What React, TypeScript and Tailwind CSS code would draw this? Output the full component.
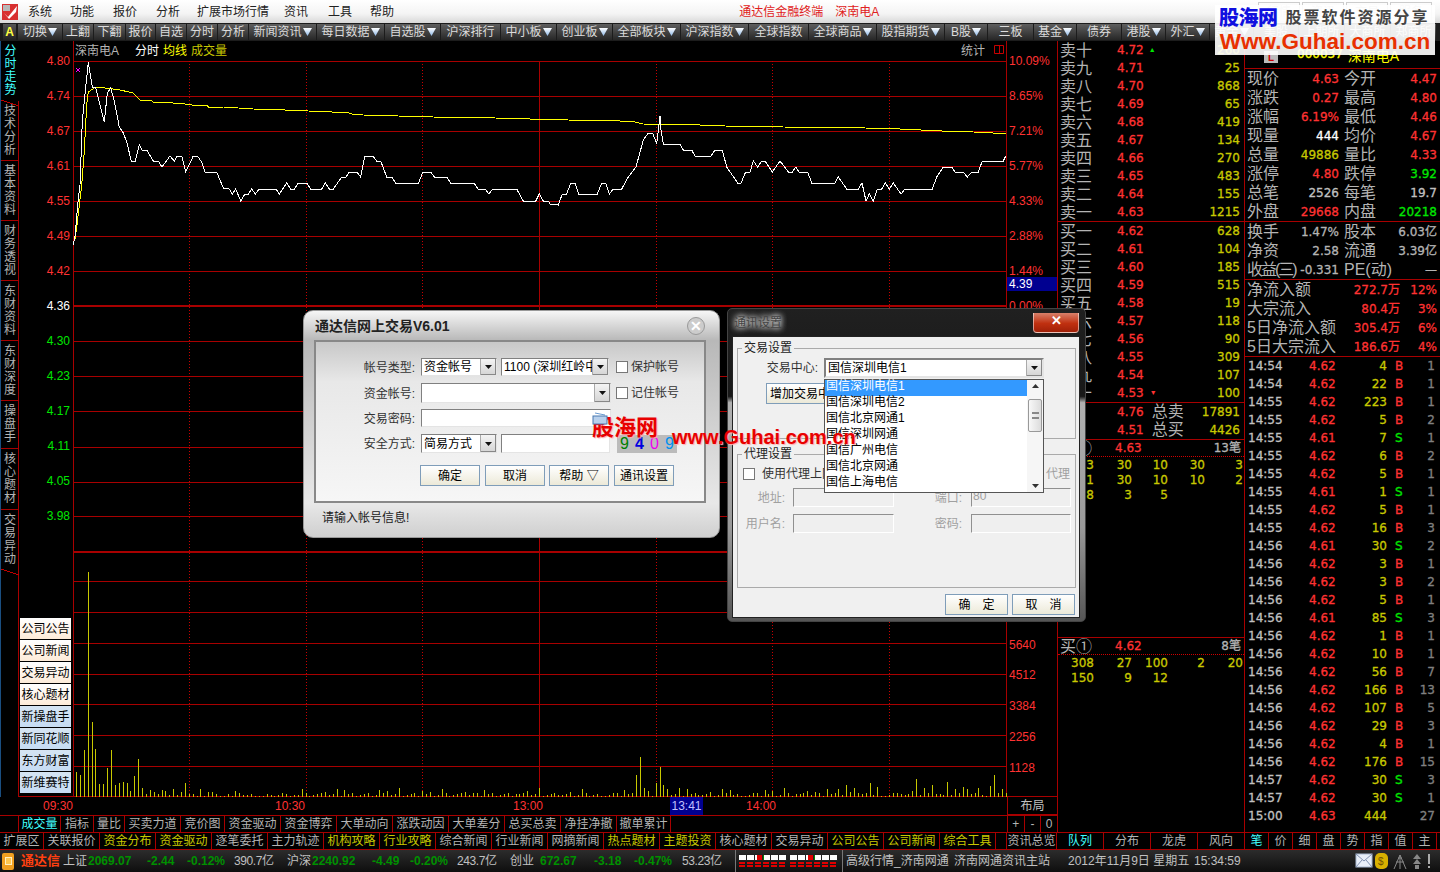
import type { ReactNode } from "react";

const num = "[font-family:'DejaVu_Sans','Noto_Sans_CJK_SC',sans-serif] text-[12px] [-webkit-text-stroke:0.3px]";
const red = "text-[#ff3232]";
const yellow = "text-[#c8c800]";
const green = "text-[#00e600]";
const gray = "text-[#c0c0c0]";

const toolbar: [string, number, boolean?][] = [
  ["切换", 44, true], ["上翻", 30], ["下翻", 31], ["报价", 29], ["自选", 30], ["分时", 30], ["分析", 30],
  ["新闻资讯", 67, true], ["每日数据", 67, true], ["自选股", 55, true], ["沪深排行", 59], ["中小板", 55, true],
  ["创业板", 55, true], ["全部板块", 67, true], ["沪深指数", 67, true], ["全球指数", 59], ["全球商品", 67, true],
  ["股指期货", 67, true], ["B股", 42, true], ["三板", 45], ["基金", 42, true], ["债券", 44], ["港股", 43, true],
  ["外汇", 43, true], ["黄金", 43, true], ["美股", 44], ["上期所", 45], ["大商所", 45], ["郑商所", 45],
];

const sideTabs: [string, string, boolean?][] = [
  ["分时走势", "h-[60px]", true], ["技术分析", "h-[60px]"], ["基本资料", "h-[60px]"], ["财务透视", "h-[60px]"],
  ["东财资料", "h-[60px]"], ["东财深度", "h-[60px]"], ["操盘手", "h-[48px]"], ["核心题材", "h-[61px]"], ["交易异动", "h-[60px]"],
];

const sells = [["卖十", "4.72", "260"], ["卖九", "4.71", "25"], ["卖八", "4.70", "868"], ["卖七", "4.69", "65"], ["卖六", "4.68", "419"], ["卖五", "4.67", "134"], ["卖四", "4.66", "270"], ["卖三", "4.65", "483"], ["卖二", "4.64", "155"], ["卖一", "4.63", "1215"]];
const buys = [["买一", "4.62", "628"], ["买二", "4.61", "104"], ["买三", "4.60", "185"], ["买四", "4.59", "515"], ["买五", "4.58", "19"], ["买六", "4.57", "118"], ["买七", "4.56", "90"], ["买八", "4.55", "309"], ["买九", "4.54", "107"], ["买十", "4.53", "100"]];

const trades: [string, string, string, string, string][] = [
  ["14:54", "4.62", "4", "B", "1"], ["14:54", "4.62", "22", "B", "1"], ["14:55", "4.62", "223", "B", "1"], ["14:55", "4.62", "5", "B", "2"],
  ["14:55", "4.61", "7", "S", "1"], ["14:55", "4.62", "6", "B", "2"], ["14:55", "4.62", "5", "B", "1"], ["14:55", "4.61", "1", "S", "1"],
  ["14:55", "4.62", "5", "B", "1"], ["14:55", "4.62", "16", "B", "3"], ["14:56", "4.61", "30", "S", "2"], ["14:56", "4.62", "3", "B", "1"],
  ["14:56", "4.62", "3", "B", "2"], ["14:56", "4.62", "5", "B", "1"], ["14:56", "4.61", "85", "S", "3"], ["14:56", "4.62", "1", "B", "1"],
  ["14:56", "4.62", "10", "B", "1"], ["14:56", "4.62", "56", "B", "7"], ["14:56", "4.62", "166", "B", "13"], ["14:56", "4.62", "107", "B", "5"],
  ["14:56", "4.62", "29", "B", "3"], ["14:56", "4.62", "4", "B", "1"], ["14:56", "4.62", "176", "B", "15"], ["14:57", "4.62", "30", "S", "3"],
  ["14:57", "4.62", "30", "S", "1"], ["15:00", "4.63", "444", "", "27"],
];

// [label, value, colour, label, value, colour]
const quote: [string, string, string, string, string, string][] = [
  ["现价", "4.63", red, "今开", "4.47", red],
  ["涨跌", "0.27", red, "最高", "4.80", red],
  ["涨幅", "6.19%", red, "最低", "4.46", red],
  ["现量", "444", "text-white", "均价", "4.67", red],
  ["总量", "49886", yellow, "量比", "4.33", red],
  ["涨停", "4.80", red, "跌停", "3.92", green],
  ["总笔", "2526", gray, "每笔", "19.7", gray],
  ["外盘", "29668", red, "内盘", "20218", green],
];

const indicatorTabs: [string, string][] = [
  ["成交量", "w-[43px]"], ["指标", "w-[33px]"], ["量比", "w-[31px]"], ["买卖力道", "w-[56px]"], ["竞价图", "w-[44px]"], ["资金驱动", "w-[56px]"],
  ["资金博弈", "w-[56px]"], ["大单动向", "w-[56px]"], ["涨跌动因", "w-[56px]"], ["大单差分", "w-[56px]"], ["总买总卖", "w-[56px]"], ["净挂净撤", "w-[56px]"], ["撤单累计", "w-[54px]"],
];

const infoTabs: [string, string, boolean?][] = [
  ["扩展区", "w-[44px]"], ["关联报价", "w-[56px]"], ["资金分布", "w-[56px]", true], ["资金驱动", "w-[56px]", true], ["逐笔委托", "w-[56px]"], ["主力轨迹", "w-[56px]"],
  ["机构攻略", "w-[56px]", true], ["行业攻略", "w-[56px]", true], ["综合新闻", "w-[56px]"], ["行业新闻", "w-[56px]"], ["网摘新闻", "w-[56px]"], ["热点题材", "w-[56px]", true],
  ["主题投资", "w-[56px]", true], ["核心题材", "w-[56px]"], ["交易异动", "w-[56px]"], ["公司公告", "w-[56px]", true], ["公司新闻", "w-[56px]", true], ["综合工具", "w-[56px]", true],
];

const white: number[][] = [
  [73.3, 244.5], [75, 236], [78.3, 199], [80, 185], [82.3, 121], [84.3, 101], [88.3, 62], [90, 73], [92.3, 87], [95.7, 88], [99.3, 102], [104.3, 122], [107.3, 93], [110.7, 88], [114, 100], [119.3, 127], [123.3, 133], [126.7, 142], [131.3, 161], [135.3, 161], [139.3, 145], [142, 150], [146.7, 150], [153.3, 161], [158.3, 161], [162, 167], [170, 156], [174.3, 161], [177.3, 156], [181.7, 156], [185.7, 172], [193.3, 156], [197.3, 156], [201.7, 162], [205, 172], [216.7, 172], [223.3, 188], [229.3, 189], [232.3, 194], [235.7, 189], [240.7, 201], [245, 194], [248.3, 194], [251.7, 189], [255.3, 194], [259.3, 189], [276, 189], [279.3, 194], [286.7, 183], [290.7, 189], [294.3, 189], [298.3, 183], [306.7, 183], [310.7, 189], [321.7, 189], [325.3, 183], [329.3, 189], [333.3, 189], [341.7, 177], [346, 177], [349.3, 172], [356.7, 172], [360.7, 177], [364.7, 156], [372.7, 156], [376.7, 161], [380.7, 161], [386.7, 177], [391.7, 177], [395.7, 183], [418.7, 183], [422.7, 172], [430.7, 172], [434.3, 177], [446.7, 177], [450.7, 183], [474, 183], [478, 189], [485, 189], [489, 194], [492.7, 189], [516.7, 189], [523.3, 201], [535.7, 201], [539.3, 194], [543.3, 201], [548.7, 201], [550, 204],
  [558.3, 205], [562.3, 194], [566.7, 194], [570.7, 183], [575, 183], [578.7, 194], [597.3, 194], [601.7, 183], [605.7, 183], [609.3, 194], [613.3, 189], [621.7, 189], [628.3, 177], [636, 167], [643.3, 140], [648.3, 133], [652.7, 133], [656.7, 144], [660, 116], [661, 130], [663.3, 144], [680, 144], [683.3, 150], [691.7, 150], [695, 156], [711, 156], [715, 150], [722.3, 150], [726.7, 167], [737.7, 183], [741, 183], [745.7, 172], [750, 172], [753.3, 161], [757.7, 167], [761.7, 161], [765, 161], [772.3, 172], [780, 161], [788.3, 172], [792.3, 172], [796, 167], [799, 172], [807.7, 172], [811.7, 183], [835, 183], [838.3, 177], [846.7, 189], [858.3, 189], [862, 183], [866, 201], [869.3, 194], [873.3, 201], [877.3, 189], [881.7, 189], [885.3, 183], [889.3, 189], [893.3, 183], [901, 194], [905, 189], [932.3, 189], [936.7, 177], [943.3, 167], [951.7, 167], [955, 172], [963.3, 172], [967.3, 177], [971.7, 172], [978.3, 172], [982.3, 161], [1003.3, 161], [1005.7, 156],
];

const avg: number[][] = [
  [75, 239], [77.3, 222.5], [81.7, 185], [84.3, 151.5], [86.7, 104], [88.3, 92], [95.7, 87], [113.3, 89], [120, 90], [133.3, 93], [140, 100], [151.7, 101], [153.3, 102], [165, 102], [173.3, 103], [183.3, 103], [185, 104], [191.7, 105], [206.7, 105], [208.3, 107], [223.3, 107], [238.3, 108], [253.3, 109], [285, 110], [308.3, 111], [331.7, 112], [346.7, 112], [351.7, 114], [363.3, 115], [398.3, 116], [433.3, 117], [495, 118], [530, 119], [550, 119], [568.3, 120], [620, 121], [635, 122], [643.3, 124], [700, 125], [725, 126], [783.3, 127], [865, 128], [900, 129], [941.7, 131], [973.3, 132], [993.3, 133], [1005.7, 134],
];

const firstBars = [25, 22, 47, 225, 75, 48, 13, 13, 29, 47, 12, 14, 15, 14, 6, 21, 38, 9, 3, 7, 5, 3, 7, 6, 2, 8, 2, 5, 14, 3, 3, 1, 8, 1, 5, 5, 3, 1, 1, 3, 1, 6, 4, 2, 2, 3, 1, 1, 1, 3, 2, 1, 2, 4, 3, 1, 2];
const barOverrides: Record<number, number> = { 144: 22, 145: 40, 146: 9, 147: 6, 149: 14, 150: 30, 151: 12, 152: 8, 196: 8, 198: 12, 200: 9, 204: 14, 206: 10, 216: 18, 218: 9, 220: 12, 224: 15, 226: 8, 228: 10, 232: 9, 235: 11, 236: 22, 238: 8 };

const pts = (list: number[][]) => list.map((p) => p.join(",")).join(" ");

function barsPath() {
  let d = "";
  for (let i = 0; i < 240; i++) {
    const h = i < firstBars.length ? firstBars[i] : barOverrides[i] ?? 1 + ((i * 7) % 11 > 6 ? (i * 13) % 9 : (i * 5) % 4);
    const x = Math.round(76 + i * 3.89) + 0.5;
    d += `M${x} 797V${797 - h}`;
  }
  return d;
}

function Arrow() {
  return (
    <svg width="9" height="8" viewBox="0 0 9 8" className="ml-[1px] shrink-0">
      <defs>
        <linearGradient id="arrowFill" x1="0" x2="0" y1="0" y2="1">
          <stop offset="0" stopColor="#ffffff" />
          <stop offset="1" stopColor="#8db8e8" />
        </linearGradient>
      </defs>
      <path d="M0 0H9L4.5 8Z" fill="url(#arrowFill)" />
    </svg>
  );
}

function MenuBar() {
  const items: [string, string][] = [["系统", "ml-[10px]"], ["功能", "ml-[18px]"], ["报价", "ml-[19px]"], ["分析", "ml-[19px]"], ["扩展市场行情", "ml-[17px]"], ["资讯", "ml-[15px]"], ["工具", "ml-[20px]"], ["帮助", "ml-[18px]"]];
  return (
    <div className="flex h-[23px] shrink-0 items-center bg-[linear-gradient(180deg,#ffffff,#f4f4f4_60%,#d8d8d8)] text-[12px] text-[#222]">
      <svg width="16" height="16" viewBox="0 0 16 16" className="ml-[2px]">
        <rect width="16" height="16" fill="#d83030" />
        <path d="M2 9l4 4L15 2l-1 6-7 7z" fill="#fff" />
        <rect x="1" y="1" width="7" height="6" fill="#b8b8b8" />
      </svg>
      {items.map(([label, space]) => (
        <span key={label} className={space}>{label}</span>
      ))}
      <span className="ml-[345px] text-[#e02020]">通达信金融终端</span>
      <span className="ml-[12px] text-[#e02020]">深南电A</span>
      <div className="ml-auto mr-[8px] flex gap-[2px] text-[#bbb]">
        {["行情", "资讯", "交易", "服务"].map((t) => (
          <span key={t} className="border border-[#ccc] px-[8px]">{t}</span>
        ))}
      </div>
    </div>
  );
}

function Toolbar() {
  return (
    <div className="flex h-[18px] shrink-0 items-center gap-[1px] overflow-hidden bg-[#1c1c1c] pl-[3px] text-[12px] text-[#dcdcdc]">
      <span className="mr-[1px] flex h-[16px] w-[13px] shrink-0 items-center justify-center bg-[linear-gradient(180deg,#555,#222)] font-bold text-[#ffff40]">A</span>
      {toolbar.map(([label, width, arrow]) => (
        <span
          key={label}
          style={{ width }}
          className="flex h-[16px] shrink-0 items-center justify-center whitespace-nowrap bg-[linear-gradient(180deg,#5e5e5e,#262626)]"
        >
          {label}
          {arrow && <Arrow />}
        </span>
      ))}
    </div>
  );
}

function SideTabs() {
  return (
    <div className="flex w-[19px] shrink-0 flex-col border-l border-l-[#1a4e80]">
      {sideTabs.map(([label, height, active], tab) => (
        <div
          key={label}
          className={`relative flex w-full flex-col items-center justify-center pl-[1px] text-[12px] leading-[13px] ${height} ${active ? "text-[#40ffff]" : "border-r border-[#a80000] text-[#b4b4b4]"} ${tab === 0 || tab === 8 ? "" : "border-b border-[#a80000]"}`}
        >
          {label.split("").map((c, i) => (
            <span key={i}>{c}</span>
          ))}
          {(tab === 0 || tab === 8) && (
            <svg width="18" height="7" viewBox="0 0 18 7" className="absolute -bottom-[6px] left-0" shapeRendering="crispEdges">
              <path d="M0 0L18 6" stroke="#c00000" fill="none" />
            </svg>
          )}
        </div>
      ))}
      <div className="grow border-r border-[#a80000]" />
    </div>
  );
}

function Chart() {
  const priceLines = [61, 96, 131, 166, 201, 236, 271, 341, 376, 411, 447, 482, 516];
  const volLines = [581, 612, 643, 674, 704, 735, 766];
  const dotted = [189, 306, 422, 656, 772, 889];
  const prices: [string, string][] = [["4.80", "#ff3232"], ["4.74", "#ff3232"], ["4.67", "#ff3232"], ["4.61", "#ff3232"], ["4.55", "#ff3232"], ["4.49", "#ff3232"], ["4.42", "#ff3232"], ["4.36", "#ffffff"], ["4.30", "#00e600"], ["4.23", "#00e600"], ["4.17", "#00e600"], ["4.11", "#00e600"], ["4.05", "#00e600"], ["3.98", "#00e600"]];
  const pcts = ["10.09%", "8.65%", "7.21%", "5.77%", "4.33%", "2.88%", "1.44%", "0.00%"];
  const vols: [string, number][] = [["5640", 645], ["4512", 675], ["3384", 706], ["2256", 737], ["1128", 768]];
  return (
    <svg width="1039" height="756" viewBox="19 41 1039 756" className="block shrink-0" fontFamily="'Liberation Sans','Noto Sans CJK SC',sans-serif" fontSize="12">
      <text x="75" y="55" fill="#b4b4b4">深南电A</text>
      <text x="135" y="55" fill="#ffffff">分时</text>
      <text x="163" y="55" fill="#ffff00">均线</text>
      <text x="191" y="55" fill="#c8c800">成交量</text>
      <text x="961" y="55" fill="#b4b4b4">统计</text>
      <path d="M994.5 45.5h9v8h-9zM999.5 45.5v8" fill="none" stroke="#c80000" />
      <g shapeRendering="crispEdges" stroke="#a80000" fill="none">
        {priceLines.concat(volLines).map((y) => (
          <path key={y} d={`M73 ${y + 0.5}H1006`} />
        ))}
        <path d="M73 306H1006M73 552H1006" strokeWidth="2" />
        <path d="M73.5 41V797M1006.5 41V797M539.5 61V797M1057.5 41V797M19 796.5H1058" />
        {dotted.map((x) => (
          <path key={x} d={`M${x + 0.5} 61V797`} strokeDasharray="1 2" stroke="#c80000" />
        ))}
      </g>
      <path d={barsPath()} stroke="#c8c800" fill="none" shapeRendering="crispEdges" />
      <polyline points={pts(avg)} fill="none" stroke="#ffff00" shapeRendering="crispEdges" />
      <polyline points={pts(white)} fill="none" stroke="#ffffff" shapeRendering="crispEdges" />
      <path d="M76 68l4 4M80 68l-4 4" stroke="#ff00ff" />
      {prices.map(([p, c], i) => (
        <text key={p} x="70" y={65 + i * 35} textAnchor="end" fill={c}>{p}</text>
      ))}
      {pcts.map((p, i) => (
        <text key={p} x="1009" y={65 + i * 35} fill="#ff3232">{p}</text>
      ))}
      {vols.map(([v, y]) => (
        <text key={v} x="1009" y={y + 4} fill="#ff3232">{v}</text>
      ))}
      <rect x="1007" y="277" width="50" height="14" fill="#000090" />
      <text x="1009" y="288" fill="#ffffff">4.39</text>
    </svg>
  );
}

function QuickLinks() {
  const rows: [string, boolean][] = [["公司公告", true], ["公司新闻", true], ["交易异动", true], ["核心题材", true], ["新操盘手", false], ["新同花顺", false], ["东方财富", false], ["新维赛特", false]];
  return (
    <div className="absolute left-[20px] top-[618px] flex w-[51px] flex-col gap-[1px]">
      {rows.map(([label, warm]) => (
        <div
          key={label}
          className={`flex h-[21px] items-center justify-center text-[12px] text-black ${warm ? "bg-[linear-gradient(180deg,#ffffff,#fdebd8)]" : "bg-[linear-gradient(180deg,#d5e4f2,#c6dcf3)]"}`}
        >
          {label}
        </div>
      ))}
    </div>
  );
}

function TimeRow() {
  return (
    <div className="flex h-[18px] shrink-0 items-center text-[12px] text-[#ff3232]">
      <span className="ml-[43px] w-[30px]">09:30</span>
      <span className="ml-[202px] w-[30px]">10:30</span>
      <span className="ml-[208px] w-[30px]">13:00</span>
      <span className="ml-[127px] flex h-full w-[33px] items-center justify-center bg-[#000090] text-[#c0c0ff]">13:41</span>
      <span className="ml-[43px] w-[30px]">14:00</span>
      <span className="ml-auto flex h-full w-[51px] items-center justify-center border-x border-b border-[#a80000] text-[#c0c0c0]">布局</span>
    </div>
  );
}

function IndicatorRow() {
  return (
    <div className="flex h-[17px] shrink-0 items-stretch border-t border-[#a80000] text-[12px] leading-[16px] text-[#b4b4b4]">
      {indicatorTabs.map(([label, width], i) => (
        <span key={label} className={`${width} border-r border-[#a80000] text-center ${i === 0 ? "ml-[18px] border-l text-[#40ffff]" : ""}`}>{label}</span>
      ))}
      <div className="ml-auto flex w-[51px] border-x border-[#a80000]">
        {["+", "-", "0"].map((s) => (
          <span key={s} className="flex-1 border-r border-[#a80000] text-center last:border-r-0">{s}</span>
        ))}
      </div>
    </div>
  );
}

function BookRow({ row, mark }: { row: string[]; mark?: ReactNode }) {
  return (
    <div className="flex h-[18px] items-center pr-[4px]">
      <span className="w-[59px] pl-[2px] pt-[1px] text-[16px] leading-[18px] text-[#b4b4b4]">{row[0]}</span>
      <span className={`${num} ${red}`}>{row[1]}</span>
      {mark}
      <span className={`${num} ${yellow} ml-auto`}>{row[2]}</span>
    </div>
  );
}

function QueueCols({ cols }: { cols: string[] }) {
  const widths = ["w-[36px]", "w-[38px]", "w-[36px]", "w-[37px]", "w-[38px]"];
  return (
    <div className="flex h-[15px] items-center">
      {cols.map((c, i) => (
        <span key={i} className={`${widths[i]} ${num} ${yellow} text-right`}>{c}</span>
      ))}
    </div>
  );
}

function OrderBook() {
  const dotted = "border-b border-dotted border-[#d00000]";
  return (
    <div className="flex w-[187px] shrink-0 flex-col border-r border-[#a80000]">
      <div className="border-b border-[#a80000]">
        {sells.map((row, i) => (
          <BookRow key={row[0]} row={row} mark={i === 0 ? <span className="ml-[5px] text-[7px] text-[#00e600]">▲</span> : undefined} />
        ))}
      </div>
      <div className="border-b border-[#a80000]">
        {buys.map((row, i) => (
          <BookRow key={row[0]} row={row} mark={i === 9 ? <span className="ml-[6px] text-[7px] text-[#ff3232]">▼</span> : undefined} />
        ))}
      </div>
      <div className="border-b border-[#a80000]">
        {[["均", "4.76", "总卖", "17891"], ["均", "4.51", "总买", "4426"]].map(([a, p, l, q]) => (
          <div key={l} className="flex h-[18px] items-center pr-[4px]">
            <span className="w-[59px] pl-[2px] text-[16px] leading-[18px] text-[#b4b4b4]">{a}</span>
            <span className={`${num} ${red}`}>{p}</span>
            <span className="ml-[8px] text-[16px] leading-[18px] text-[#b4b4b4]">{l}</span>
            <span className={`${num} ${yellow} ml-auto`}>{q}</span>
          </div>
        ))}
      </div>
      <div className={`flex h-[17px] items-center pr-[3px] ${dotted}`}>
        <span className="w-[57px] pl-[2px] text-[16px] leading-[17px] text-[#b4b4b4]">卖①</span>
        <span className={`${num} ${red}`}>4.63</span>
        <span className={`${num} ml-auto text-[#b4b4b4]`}>13笔</span>
      </div>
      <QueueCols cols={["33", "30", "10", "30", "3"]} />
      <QueueCols cols={["1", "30", "10", "10", "2"]} />
      <QueueCols cols={["8", "3", "5"]} />
      <div className="mt-[135px] h-[1px] bg-[#a80000]" />
      <div className={`flex h-[17px] items-center pr-[3px] ${dotted}`}>
        <span className="w-[57px] pl-[2px] text-[16px] leading-[17px] text-[#b4b4b4]">买①</span>
        <span className={`${num} ${red}`}>4.62</span>
        <span className={`${num} ml-auto text-[#b4b4b4]`}>8笔</span>
      </div>
      <QueueCols cols={["308", "27", "100", "2", "20"]} />
      <QueueCols cols={["150", "9", "12"]} />
    </div>
  );
}

function QuotePanel() {
  const label = "text-[16px] leading-[19px] text-[#b4b4b4]";
  return (
    <div className="flex w-[195px] shrink-0 flex-col">
      <div className="flex h-[28px] shrink-0 items-end border-b border-[#a80000] pb-[5px]">
        <span className="ml-[19px] flex h-[12px] w-[14px] items-center justify-center bg-[#bbb] text-[10px] font-bold text-[#d00000]">L</span>
        <span className={`${num} ml-[19px] text-[#ffff00]`}>000037</span>
        <span className="ml-[5px] text-[14px] leading-[14px] text-[#ffff00]">深南电A</span>
      </div>
      <div className="border-b border-[#a80000]">
        {quote.map(([a, av, ac, b, bv, bc]) => (
          <div key={a} className="flex h-[19px] items-center pl-[2px] pr-[3px]">
            <span className={`${label} w-[32px]`}>{a}</span>
            <span className={`${num} ${ac} w-[60px] text-right`}>{av}</span>
            <span className={`${label} ml-[5px]`}>{b}</span>
            <span className={`${num} ${bc} ml-auto`}>{bv}</span>
          </div>
        ))}
      </div>
      <div className="border-b border-[#a80000]">
        {[["换手", "1.47%", "股本", "6.03亿"], ["净资", "2.58", "流通", "3.39亿"], ["收益(三)", "-0.331", "PE(动)", "—"]].map(([a, av, b, bv]) => (
          <div key={a} className="flex h-[19px] items-center pl-[2px] pr-[3px]">
            <span className={`${label} ${a.length > 2 ? "w-[50px] tracking-[-2px]" : "w-[32px]"}`}>{a}</span>
            <span className={`${num} text-[#b4b4b4] ${a.length > 2 ? "w-[42px]" : "w-[60px]"} text-right`}>{av}</span>
            <span className={`${label} ml-[5px] ${b.length > 2 ? "text-[14px]" : ""}`}>{b}</span>
            <span className={`${num} ml-auto text-[#b4b4b4]`}>{bv}</span>
          </div>
        ))}
      </div>
      <div className="border-b border-[#a80000]">
        {[["净流入额", "272.7万", "12%"], ["大宗流入", "80.4万", "3%"], ["5日净流入额", "305.4万", "6%"], ["5日大宗流入", "186.6万", "4%"]].map(([a, v, p]) => (
          <div key={a} className="flex h-[19px] items-center pl-[2px] pr-[3px]">
            <span className={`${label} whitespace-nowrap`}>{a}</span>
            <span className={`${num} ${red} ml-auto`}>{v}</span>
            <span className={`${num} ${red} w-[37px] text-right`}>{p}</span>
          </div>
        ))}
      </div>
      <div>
        {trades.map(([t, p, q, side, n], i) => (
          <div key={i} className="flex h-[18px] items-center pl-[3px] pr-[5px]">
            <span className={`${num} w-[61px] ${gray}`}>{t}</span>
            <span className={`${num} w-[50px] ${red}`}>{p}</span>
            <span className={`${num} ${yellow} w-[28px] text-right`}>{q}</span>
            <span className={`${num} ml-[8px] w-[12px] ${side === "S" ? green : red}`}>{side}</span>
            <span className={`${num} grow text-right text-[#808080]`}>{n}</span>
          </div>
        ))}
      </div>
    </div>
  );
}

function InfoRow() {
  return (
    <div className="flex h-[18px] shrink-0 border-y border-[#a80000] text-[12px] leading-[16px] text-[#b4b4b4]">
      {infoTabs.map(([label, width, hot]) => (
        <span key={label} className={`${width} border-r border-[#a80000] text-center ${hot ? "text-[#c8c800]" : ""}`}>{label}</span>
      ))}
      <span className="w-[11px] border-r border-[#a80000]" />
      <span className="w-[50px] border-r border-[#a80000] text-center">资讯总览</span>
      {["队列", "分布", "龙虎", "风向"].map((t, i) => (
        <span key={t} className={`w-[47px] border-r border-[#a80000] text-center ${i === 0 ? "text-[#40ffff]" : ""}`}>{t}</span>
      ))}
      {["笔", "价", "细", "盘", "势", "指", "值", "主"].map((t, i) => (
        <span key={t} className={`w-[24px] border-r border-[#a80000] text-center ${i === 0 ? "text-[#40ffff]" : ""}`}>{t}</span>
      ))}
    </div>
  );
}

function Meter() {
  const cell = [0, 8, 16, 24, 32, 40];
  return (
    <svg width="49" height="14" viewBox="0 0 49 14" className="shrink-0">
      <rect x="0.5" y="0.5" width="48" height="6" fill="#fff" stroke="#222" />
      <rect x="19" y="1" width="5" height="5" fill="#e00000" />
      <rect x="24" y="1" width="2" height="5" fill="#008000" />
      {cell.map((x) => (
        <path key={x} d={`M${x + 0.5} 0V7`} stroke="#222" />
      ))}
      {cell.map((x) => (
        <g key={x} fill="#e00000">
          <rect x={x + 1} y="8" width="6" height="2" />
          <rect x={x + 1} y="11" width="6" height="2" />
        </g>
      ))}
    </svg>
  );
}

function StatusBar() {
  const q = "font-bold text-[#009000]";
  const amount = "w-[39px] tracking-[-0.4px]";
  return (
    <div className="flex h-[22px] shrink-0 items-center whitespace-nowrap bg-[linear-gradient(180deg,#2c2c2c,#0e0e0e)] text-[12px] text-[#c0c0c0]">
      <span className="ml-[2px] flex h-[17px] w-[12px] items-center justify-center rounded-[2px] bg-[#f0a020]">
        <span className="h-[8px] w-[7px] border border-[#fff0c0] bg-[#ffc850]" />
      </span>
      <span className="ml-[7px] w-[40px] text-[13px] font-bold text-[#ff4010]">通达信</span>
      <span className="ml-[2px] w-[25px]">上证</span>
      <span className={`${q} w-[46px]`}>2069.07</span>
      <span className={`${q} ml-[13px] w-[30px]`}>-2.44</span>
      <span className={`${q} ml-[10px] w-[40px]`}>-0.12%</span>
      <span className={`ml-[7px] ${amount}`}>390.7亿</span>
      <span className="ml-[14px] w-[25px]">沪深</span>
      <span className={`${q} w-[46px]`}>2240.92</span>
      <span className={`${q} ml-[14px] w-[30px]`}>-4.49</span>
      <span className={`${q} ml-[8px] w-[40px]`}>-0.20%</span>
      <span className={`ml-[7px] ${amount}`}>243.7亿</span>
      <span className="ml-[14px] w-[25px]">创业</span>
      <span className={`${q} ml-[5px] w-[40px]`}>672.67</span>
      <span className={`${q} ml-[14px] w-[30px]`}>-3.18</span>
      <span className={`${q} ml-[10px] w-[40px]`}>-0.47%</span>
      <span className={`ml-[8px] ${amount}`}>53.23亿</span>
      <span className="ml-[14px] h-full w-[1px] bg-[#777]" />
      <span className="ml-[2px] flex gap-[2px]">
        <Meter />
        <Meter />
      </span>
      <span className="ml-[4px] h-full w-[1px] bg-[#777]" />
      <span className="ml-[3px] w-[108px]">高级行情_济南网通</span>
      <span className="w-[114px]">济南网通资讯主站</span>
      <span className="w-[126px]">2012年11月9日 星期五</span>
      <span className="w-[70px]">15:34:59</span>
      <svg width="84" height="20" viewBox="0 0 84 20" className="ml-[91px] shrink-0">
        <rect x="1" y="3" width="16" height="13" fill="#e8eef8" stroke="#a8b8d0" />
        <path d="M1 3l8 7 8-7M1 16l6-7M17 16l-6-7" fill="none" stroke="#8090b0" />
        <rect x="20" y="2" width="13" height="16" rx="5" fill="#d8b000" />
        <text x="23" y="14" fontSize="10" fill="#705000">$</text>
        <path d="M45 4l-6 14M45 4l6 14M45 4v14M41 11h8M43 7h4" stroke="#888" fill="none" />
        <path d="M62 3l-4 5h8zM62 8l-4 5h8zM60 14h4v4h-4z" fill="#888" />
        <path d="M74 3v10" stroke="#aaa" strokeWidth="2" />
        <rect x="73" y="15" width="2" height="2" fill="#aaa" />
      </svg>
    </div>
  );
}

function Watermarks() {
  return (
    <>
      <div className="absolute left-[1215px] top-[5px] flex h-[50px] w-[220px] flex-col items-center bg-[#ffffffe8] leading-none">
        <div className="flex h-[26px] w-full items-center pl-[4px]">
          <span className="text-[20px] font-black tracking-[-0.5px] text-[#1010e0]">股海网</span>
          <span className="ml-[8px] text-[16px] font-bold tracking-[2px] text-[#444]">股票软件资源分享</span>
        </div>
        <span className="text-[22.5px] font-bold text-[#e83000]">Www.Guhai.com.cn</span>
      </div>
      <span className="absolute left-[592px] top-[417px] text-[22px] font-bold leading-none text-[#e80000] [text-shadow:1px_1px_1px_#ffb0b0]">股海网</span>
      <span className="absolute left-[672px] top-[427px] text-[20px] font-bold leading-none text-[#e80000] [text-shadow:1px_1px_1px_#ffb0b0]">www.Guhai.com.cn</span>
    </>
  );
}

function ComboArrow() {
  return (
    <span className="ml-auto flex h-full w-[16px] shrink-0 items-center justify-center border-l border-[#aaa] bg-[linear-gradient(180deg,#f4f4f4,#d4d4d4)] shadow-[inset_-1px_-1px_0_#888]">
      <svg width="7" height="4" viewBox="0 0 7 4">
        <path d="M0 0H7L3.5 4Z" fill="#111" />
      </svg>
    </span>
  );
}

function Field({ className, children, text }: { className: string; children?: ReactNode; text?: string }) {
  return (
    <div className={`flex items-center overflow-hidden whitespace-nowrap border border-[#808080] border-b-[#e4e4e4] border-r-[#e4e4e4] bg-white pl-[2px] text-black ${className}`}>
      {text && <span className="min-w-0 overflow-hidden">{text}</span>}
      {children}
    </div>
  );
}

function FlatButton({ children, className }: { children: ReactNode; className: string }) {
  return (
    <button className={`h-[21px] whitespace-nowrap border border-[#7f9db9] bg-[linear-gradient(180deg,#ffffff,#ece9d8)] text-[12px] text-black ${className}`}>{children}</button>
  );
}

function LoginDialog() {
  const label = "w-[101px] pr-[2px] pt-[1px] text-right text-[#333]";
  return (
    <div className="absolute left-[303px] top-[310px] flex h-[228px] w-[417px] flex-col rounded-[10px] border border-[#999] bg-[linear-gradient(180deg,#f6f6f6,#b8b8b8_13%,#e8e8e8_85%,#cfcfcf)] text-[12px]">
      <div className="flex h-[29px] shrink-0 items-center pl-[11px] pt-[1px]">
        <span className="text-[14px] font-bold text-[#222]">通达信网上交易V6.01</span>
        <span className="ml-auto mr-[14px] flex h-[18px] w-[18px] items-center justify-center rounded-full border border-[#999] bg-[#ccc] text-[14px] font-bold leading-none text-white">✕</span>
      </div>
      <div className="ml-[10px] mr-[13px] flex h-[163px] shrink-0 flex-col border-2 border-[#888] bg-[linear-gradient(180deg,#c8c8c8,#e8e8e8_25%,#f6f6f6)] pt-[16px]">
        <div className="flex h-[18px] items-center">
          <span className={label}>帐号类型:</span>
          <Field className="ml-[4px] h-full w-[76px]" text="资金帐号"><ComboArrow /></Field>
          <Field className="ml-[4px] h-full w-[108px]" text="1100 (深圳红岭中"><ComboArrow /></Field>
          <span className="ml-[7px] h-[12px] w-[12px] border border-[#777] bg-white" />
          <span className="ml-[3px] text-[#333]">保护帐号</span>
        </div>
        <div className="mt-[7px] flex h-[20px] items-center">
          <span className={label}>资金帐号:</span>
          <Field className="ml-[4px] h-full w-[190px]"><ComboArrow /></Field>
          <span className="ml-[5px] h-[12px] w-[12px] border border-[#777] bg-white" />
          <span className="ml-[3px] text-[#333]">记住帐号</span>
        </div>
        <div className="mt-[6px] flex h-[18px] items-center">
          <span className={label}>交易密码:</span>
          <Field className="relative ml-[4px] h-full w-[190px]" />
          <svg width="16" height="14" viewBox="0 0 16 14" className="-ml-[19px] z-10">
            <path d="M3 2l10 2" stroke="#6a9ad0" />
            <rect x="1" y="5" width="14" height="8" fill="#b8d0ec" stroke="#4878b0" />
          </svg>
        </div>
        <div className="mt-[7px] flex h-[19px] items-center">
          <span className={label}>安全方式:</span>
          <Field className="ml-[4px] h-full w-[76px]" text="简易方式"><ComboArrow /></Field>
          <Field className="ml-[4px] h-full w-[109px]" />
          <span className="ml-[7px] flex h-[18px] w-[60px] items-center justify-around bg-[#bbb] text-[16px] leading-none">
            <span className="text-[#008000]">9</span>
            <span className="font-bold text-[#0000e0]">4</span>
            <span className="text-[#f000f0]">0</span>
            <span className="text-[#0090f0]">9</span>
          </span>
        </div>
        <div className="ml-[104px] mt-[12px] flex gap-[5px]">
          <FlatButton className="w-[60px]">确定</FlatButton>
          <FlatButton className="w-[60px]">取消</FlatButton>
          <FlatButton className="w-[60px] -ml-[1px]">帮助 ▽</FlatButton>
          <FlatButton className="w-[60px]">通讯设置</FlatButton>
        </div>
      </div>
      <div className="flex grow items-center pb-[4px] pl-[18px] text-[#222]">请输入帐号信息!</div>
    </div>
  );
}

function GroupBox({ title, className, children }: { title: string; className: string; children: ReactNode }) {
  return (
    <div className={`relative ml-[4px] w-[339px] border border-[#aaa] ${className}`}>
      <span className="absolute -top-[8px] left-[4px] bg-[#f0f0f0] px-[2px] leading-[14px] text-[#222]">{title}</span>
      {children}
    </div>
  );
}

function SettingsDialog() {
  const centers = ["国信深圳电信1", "国信深圳电信2", "国信北京网通1", "国信深圳网通", "国信广州电信", "国信北京网通", "国信上海电信"];
  const muted = "text-[#a0a0a0]";
  const disabledField = "h-[19px] border border-[#909090] border-b-[#fff] border-r-[#fff] bg-[#efefef]";
  return (
    <div className="absolute left-[727px] top-[308px] h-[314px] w-[359px] rounded-[5px] border border-[#444] bg-[linear-gradient(180deg,#202020,#181818_28%,#b0b0b0_30%,#999_70%,#555)] text-[12px]">
      <div className="flex h-[27px] items-center pl-[6px]">
        <span className="text-[#444] [text-shadow:0_0_6px_#fff,0_0_6px_#fff]">通讯设置</span>
        <span className="ml-auto mr-[6px] flex h-[20px] w-[46px] items-start justify-center rounded-b-[4px] border border-t-0 border-[#fff8] bg-[linear-gradient(180deg,#d8806a,#c03010_55%,#a02008)] pt-[1px] text-[13px] font-bold leading-none text-white">✕</span>
      </div>
      <div className="ml-[4px] h-[282px] w-[348px] border border-[#222] bg-[#f0f0f0] pt-[11px] text-[#333]">
        <GroupBox title="交易设置" className="h-[91px]">
          <div className="mt-[9px] flex h-[20px] items-center">
            <span className="w-[80px] text-right">交易中心:</span>
            <Field className="ml-[6px] h-full w-[220px] border-2" text="国信深圳电信1"><ComboArrow /></Field>
          </div>
          <FlatButton className="ml-[28px] mt-[5px] w-[100px] pr-[20px] text-[12px]">增加交易中心</FlatButton>
        </GroupBox>
        <GroupBox title="代理设置" className="mt-[15px] h-[134px]">
          <div className="flex h-[29px] items-center pl-[5px] pt-[9px]">
            <span className="h-[12px] w-[12px] border border-[#777] bg-white" />
            <span className="ml-[7px]">使用代理上网</span>
            <span className={`ml-auto mr-[5px] ${muted}`}>代理</span>
          </div>
          <div className={`mt-[4px] flex items-center ${muted}`}>
            <span className="w-[47px] text-right">地址:</span>
            <span className={`ml-[8px] w-[101px] ${disabledField}`} />
            <span className="w-[68px] text-right">端口:</span>
            <span className={`ml-[9px] w-[100px] pl-[1px] leading-[14px] ${disabledField}`}>80</span>
          </div>
          <div className={`mt-[7px] flex items-center ${muted}`}>
            <span className="w-[47px] text-right">用户名:</span>
            <span className={`ml-[8px] w-[101px] ${disabledField}`} />
            <span className="w-[68px] text-right">密码:</span>
            <span className={`ml-[9px] w-[100px] ${disabledField}`} />
          </div>
        </GroupBox>
        <div className="mr-[4px] mt-[6px] flex justify-end gap-[4px]">
          <FlatButton className="h-[20px] w-[63px]">确　定</FlatButton>
          <FlatButton className="h-[20px] w-[63px]">取　消</FlatButton>
        </div>
      </div>
      <div className="absolute left-[96px] top-[70px] flex h-[114px] w-[220px] border border-[#555] bg-white text-black">
        <div className="flex grow flex-col">
          {centers.map((c, i) => (
            <span key={c} className={`h-[16px] pl-[1px] leading-[13px] ${i === 0 ? "bg-[#3399ff] text-white" : ""}`}>{c}</span>
          ))}
        </div>
        <div className="flex w-[16px] flex-col items-center justify-between bg-[#f6f6f6] py-[4px]">
          <svg width="7" height="4" viewBox="0 0 7 4"><path d="M3.5 0L7 4H0Z" fill="#333" /></svg>
          <span className="absolute right-[1px] top-[19px] flex h-[33px] w-[14px] items-center justify-center rounded-[2px] border border-[#999] bg-[linear-gradient(90deg,#f8f8f8,#dcdcdc)]">
            <span className="h-[7px] w-[7px] border-y-2 border-[#888]" />
          </span>
          <svg width="7" height="4" viewBox="0 0 7 4"><path d="M0 0H7L3.5 4Z" fill="#333" /></svg>
        </div>
      </div>
    </div>
  );
}

export default function App() {
  return (
    <div className="relative flex h-[872px] w-[1440px] flex-col overflow-hidden bg-black [font-family:'Liberation_Sans','Noto_Sans_CJK_SC',sans-serif]">
      <MenuBar />
      <Toolbar />
      <div className="flex h-[791px] shrink-0">
        <div className="flex w-[1058px] shrink-0 flex-col">
          <div className="relative flex h-[756px] shrink-0">
            <SideTabs />
            <Chart />
          </div>
          <TimeRow />
          <IndicatorRow />
        </div>
        <OrderBook />
        <QuotePanel />
      </div>
      <InfoRow />
      <StatusBar />
      <QuickLinks />
      <LoginDialog />
      <SettingsDialog />
      <Watermarks />
    </div>
  );
}
